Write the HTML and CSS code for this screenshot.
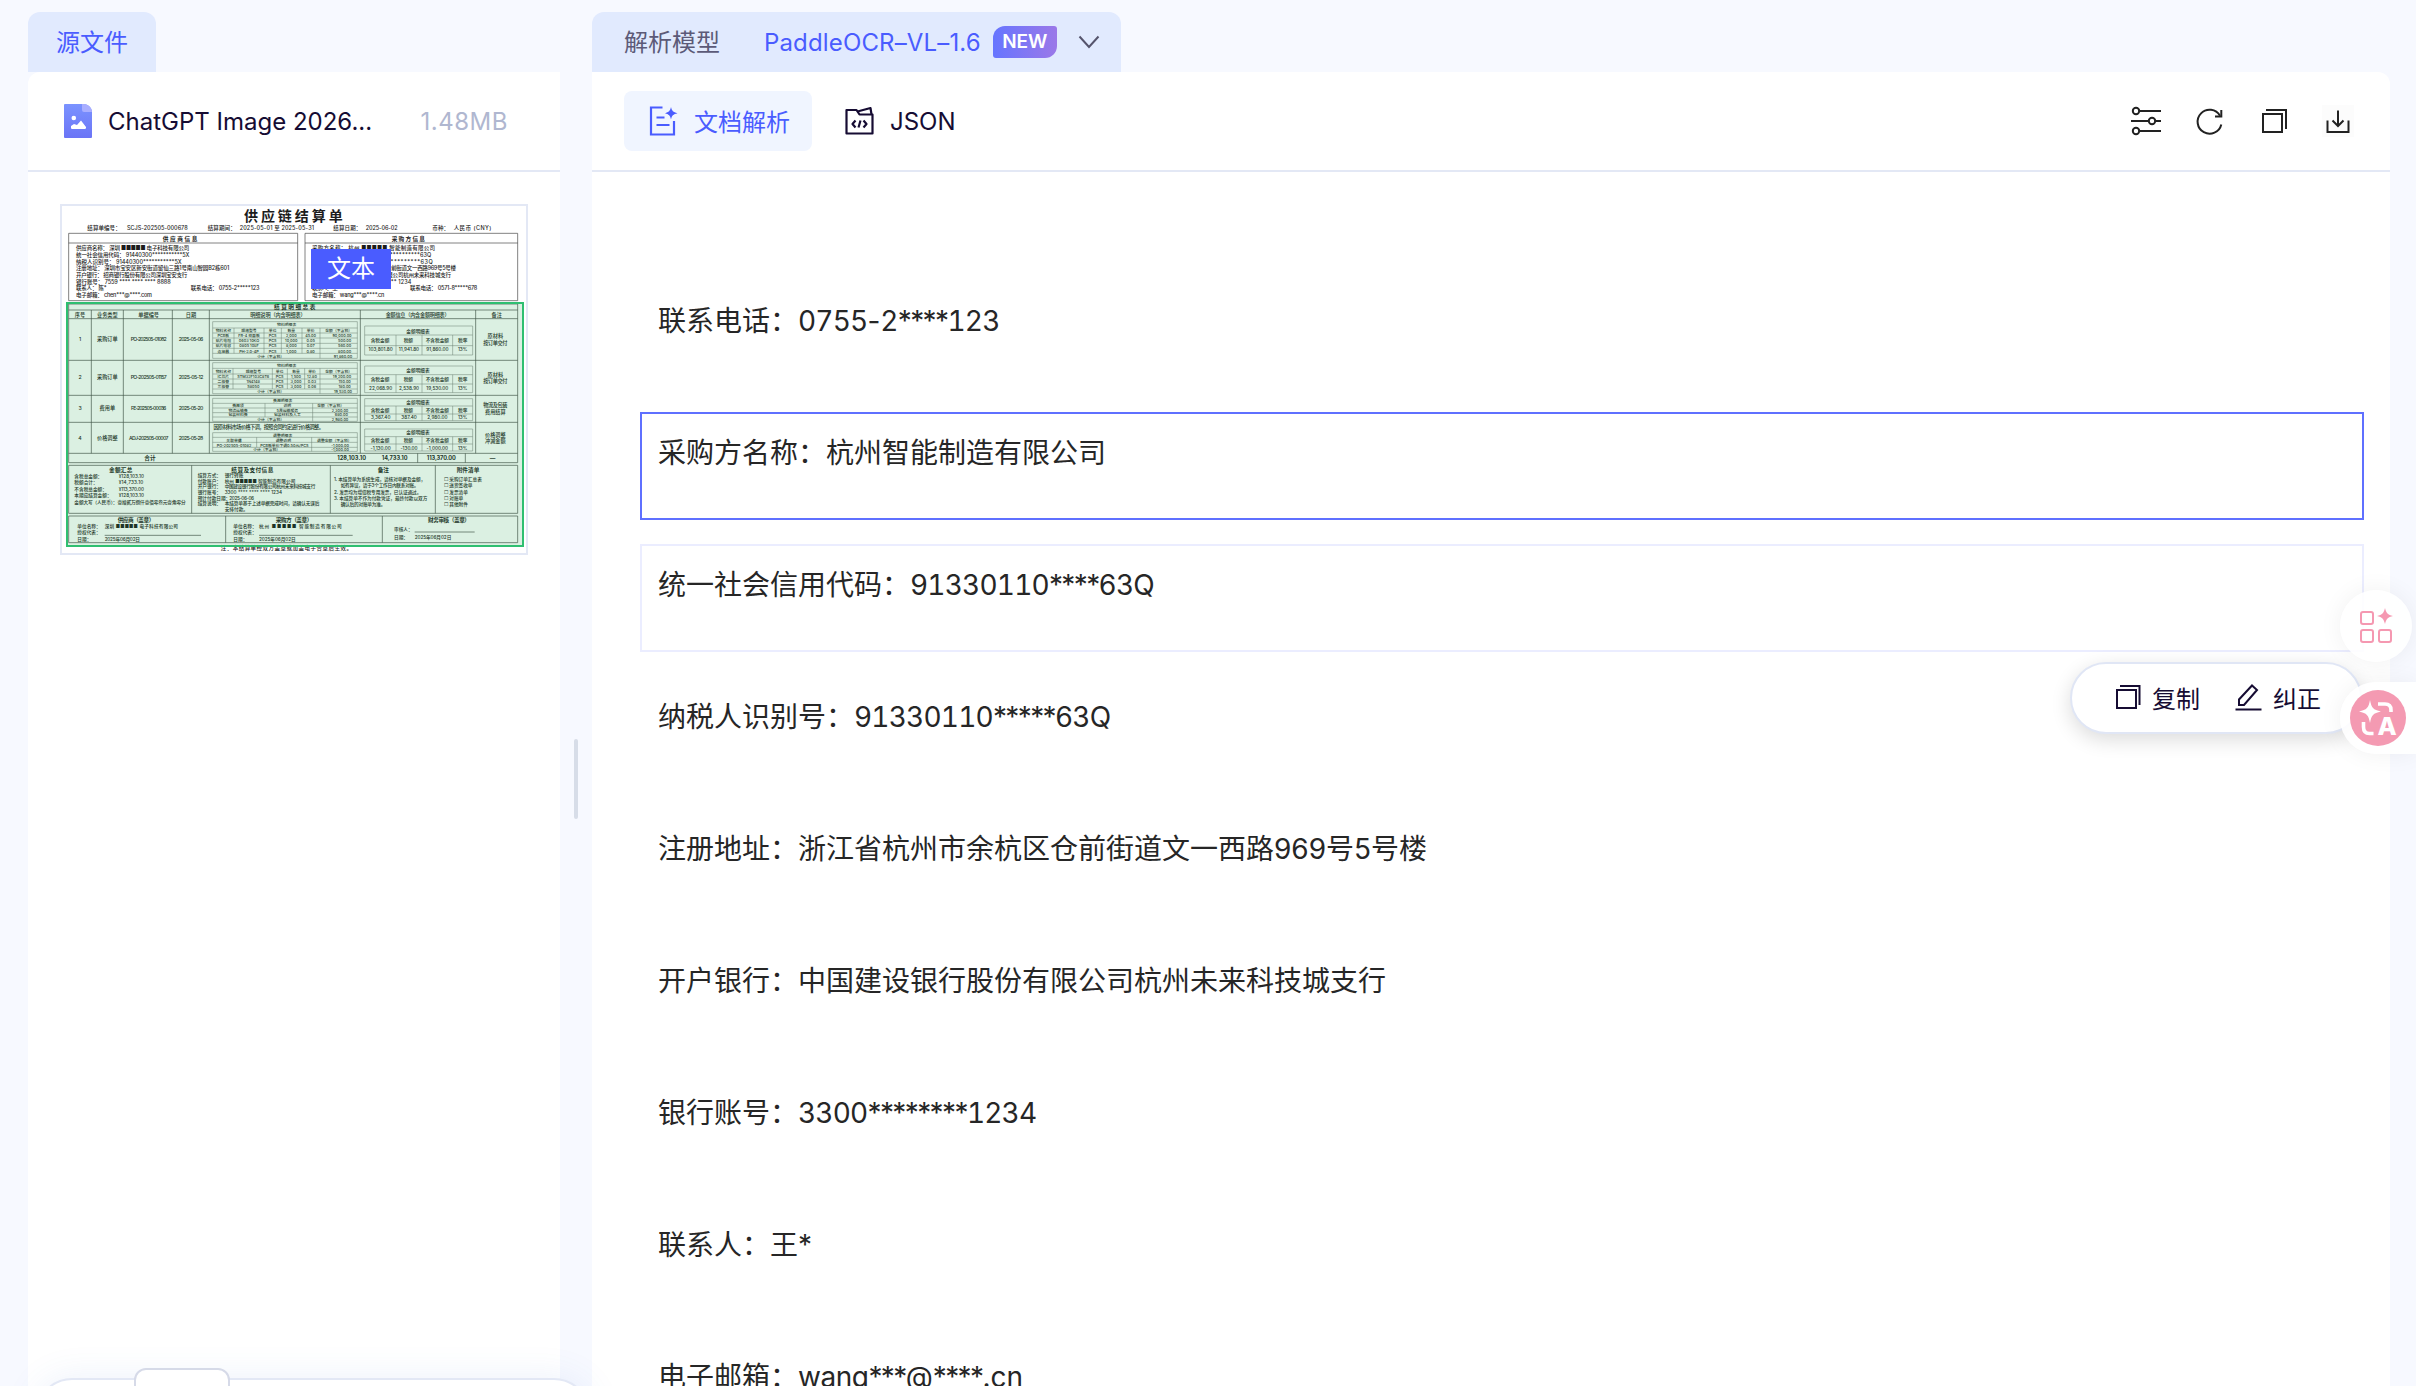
FILE: index.html
```
<!DOCTYPE html>
<html lang="zh-CN">
<head>
  <meta charset="UTF-8">
  <meta name="viewport" content="width=device-width, initial-scale=1.0">
  <title>文档解析</title>
  <link rel="stylesheet" href="styles.css">
</head>
<body>

  <section class="source">
    <div class="tab source-tab">源文件</div>
    <div class="panel source-panel">
      <header class="panel-head file-head">
        <svg class="file-icon" width="28" height="34" viewBox="0 0 28 34">
          <defs>
            <linearGradient id="fileFill" x1="0" y1="0" x2="0" y2="1">
              <stop offset="0" stop-color="#7b93ff"/>
              <stop offset="1" stop-color="#6b74f6"/>
            </linearGradient>
          </defs>
          <path d="M1 0h19c4 0 8 4 8 8v25a1 1 0 0 1-1 1H1a1 1 0 0 1-1-1V1a1 1 0 0 1 1-1z" fill="url(#fileFill)"/>
          <path d="M18 0h2c4 0 8 4 8 8h-8a2 2 0 0 1-2-2z" fill="#a9aeff"/>
          <circle cx="9.8" cy="14" r="2.3" fill="#fff"/>
          <path d="M7 24v-2l3-2 3 1 4-4.5 5 6.500v1l-.7 1H7.600z" fill="#fff"/>
        </svg>
        <span class="file-name">ChatGPT Image 2026...</span>
        <span class="file-size">1.48MB</span>
      </header>

      <div class="preview">
        <svg class="page" viewBox="0 0 1404 1053">
          <g class="t-title"><text x="552" y="51" textLength="296">供应链结算单</text></g>
          <g class="t-info">
            <text x="82" y="79" textLength="100">结算单编号：</text>
            <text x="201" y="79" textLength="182">SCJS-202505-000678</text>
            <text x="443" y="79" textLength="84">结算期间：</text>
            <text x="539" y="79" textLength="223">2025-05-01 至 2025-05-31</text>
            <text x="820" y="79" textLength="84">结算日期：</text>
            <text x="917" y="79" textLength="96">2025-06-02</text>
            <text x="1117" y="79" textLength="50">币种：</text>
            <text x="1181" y="79" textLength="113">人民币 (CNY)</text>
          </g>

          <!-- supplier / purchaser -->
          <path class="ln" d="M26 88H713V290H26zM26 117H713M735 88H1373V290H735zM735 117H1373"/>
          <g class="t-head">
            <text x="360" y="110" textLength="104">供应商信息</text>
            <text x="1045" y="110" textLength="100">采购方信息</text>
          </g>
          <g class="t-info">
            <text x="48" y="139" textLength="340">供应商名称： 深圳 ■■■■■ 电子科技有限公司</text>
            <text x="48" y="159" textLength="340">统一社会信用代码： 91440300***********5X</text>
            <text x="48" y="179" textLength="317">纳税人识别号： 91440300***********5X</text>
            <text x="48" y="199" textLength="460">注册地址： 深圳市宝安区新安街道留仙三路1号南山智园B2栋601</text>
            <text x="48" y="219" textLength="334">开户银行： 招商银行股份有限公司深圳宝安支行</text>
            <text x="48" y="239" textLength="284">银行账号： 7559 **** **** **** 8888</text>
            <text x="48" y="259" textLength="92">联系人： 陈*</text>
            <text x="392" y="259" textLength="206">联系电话： 0755-2*****123</text>
            <text x="48" y="279" textLength="228">电子邮箱： chen***@****.com</text>
            <text x="756" y="139" textLength="369">采购方名称： 杭州 ■■■■■ 智能制造有限公司</text>
            <text x="756" y="159" textLength="358">统一社会信用代码： 91330110**********63Q</text>
            <text x="756" y="179" textLength="362">纳税人识别号： 91330110***********63Q</text>
            <text x="756" y="199" textLength="432">注册地址： 浙江省杭州市余杭区仓前街道文一西路969号5号楼</text>
            <text x="756" y="219" textLength="417">开户银行： 中国建设银行股份有限公司杭州未来科技城支行</text>
            <text x="756" y="239" textLength="298">银行账号： 3300 **** **** **** 1234</text>
            <text x="756" y="259" textLength="84">联系人： 王*</text>
            <text x="1050" y="259" textLength="202">联系电话： 0571-8*****678</text>
            <text x="756" y="279" textLength="217">电子邮箱： wang***@****.cn</text>
          </g>

          <!-- settlement details -->
          <path class="ln" d="M26 300H1373V776H26zM26 318H1373M26 344H1373M26 469H1373M26 574H1373M26 655H1373M26 748H1373M94 318V748M190 318V748M337 318V748M448 318V748M901 318V748M1247 318V748M1073 748V776M1216 748V776"/>
          <g class="t-head">
            <text x="704" y="314" textLength="124">结算明细总表</text>
            <text x="270" y="769" textLength="34">合计</text>
            <text x="875" y="769" textLength="87">128,103.10</text>
            <text x="1004" y="769" textLength="77">14,733.10</text>
            <text x="1144" y="769" textLength="87">113,370.00</text>
            <text x="1298" y="769">—</text>
          </g>
          <g class="t-cell">
            <text x="60" y="338">序号</text><text x="142" y="338">业务类型</text><text x="266" y="338">单据编号</text><text x="393" y="338">日期</text>
            <text x="654" y="338" textLength="166">明细说明（内含明细表）</text><text x="1073" y="338" textLength="192">金额信息（内含金额明细表）</text><text x="1310" y="338">备注</text>
            <text x="60" y="411">1</text><text x="142" y="411">采购订单</text><text x="266" y="411" textLength="108">PO-202505-01082</text><text x="393" y="411" textLength="74">2025-05-06</text>
            <text x="60" y="526">2</text><text x="142" y="526">采购订单</text><text x="266" y="526" textLength="108">PO-202505-01157</text><text x="393" y="526" textLength="74">2025-05-12</text>
            <text x="60" y="618">3</text><text x="142" y="618">费用单</text><text x="266" y="618" textLength="106">FE-202505-00036</text><text x="393" y="618" textLength="74">2025-05-20</text>
            <text x="60" y="708">4</text><text x="142" y="708">价格调整</text><text x="266" y="708" textLength="118">ADJ-202505-00007</text><text x="393" y="708" textLength="74">2025-05-28</text>
            <text x="1306" y="403">原材料</text><text x="1306" y="422" textLength="72">按订单交付</text>
            <text x="1306" y="518">原材料</text><text x="1306" y="537" textLength="72">按订单交付</text>
            <text x="1306" y="610" textLength="72">物流及包装</text><text x="1306" y="630">费用结算</text>
            <text x="1306" y="698">价格调整</text><text x="1306" y="718">冲减金额</text>
            <text x="626" y="674" textLength="331">因原材料市场价格下调，按照合同约定进行价格调整。</text>
          </g>

          <!-- nested item tables -->
          <path class="ln thin" d="M458 353H892V463H458zM458 372H892M458 387H892M458 402H892M458 418H892M458 433H892M458 448H892M522 372V448M612 372V448M664 372V448M726 372V448M780 372V463"/>
          <path class="ln thin" d="M458 476H892V569H458zM458 493H892M458 510H892M458 525H892M458 540H892M458 555H892M519 493V555M637 493V555M682 493V555M734 493V555M780 493V569"/>
          <path class="ln thin" d="M458 583H892V652H458zM458 598H892M458 612H892M458 626H892M458 639H892M615 598V639M758 598V652"/>
          <path class="ln thin" d="M458 686H892V742H458zM458 700H892M458 715H892M458 730H892M590 700V730M755 700V742"/>
          <g class="t-mini">
            <text x="680" y="367">物料明细表</text>
            <text x="490" y="385">物料名称</text><text x="567" y="385">规格型号</text><text x="638" y="385">单位</text><text x="694" y="385">数量</text><text x="752" y="385">单价</text><text x="836" y="385">金额（不含税）</text>
            <text x="490" y="400">PCB板</text><text x="567" y="400">FR-4 双面板</text><text x="638" y="400">PCS</text><text x="694" y="400">2,000</text><text x="752" y="400">45.00</text><text x="846" y="400">90,000.00</text>
            <text x="490" y="415">贴片电阻</text><text x="567" y="415">0603 10KΩ</text><text x="638" y="415">PCS</text><text x="694" y="415">10,000</text><text x="752" y="415">0.05</text><text x="854" y="415">500.00</text>
            <text x="490" y="430">贴片电容</text><text x="567" y="430">0805 10uF</text><text x="638" y="430">PCS</text><text x="694" y="430">8,000</text><text x="752" y="430">0.07</text><text x="854" y="430">560.00</text>
            <text x="490" y="446">连接器</text><text x="567" y="446">PH-2.0-4P</text><text x="638" y="446">PCS</text><text x="694" y="446">1,000</text><text x="752" y="446">0.80</text><text x="854" y="446">800.00</text>
            <text x="632" y="461">小计（不含税）</text><text x="849" y="461">91,860.00</text>

            <text x="680" y="489">物料明细表</text>
            <text x="490" y="506">物料名称</text><text x="580" y="506">规格型号</text><text x="659" y="506">单位</text><text x="708" y="506">数量</text><text x="756" y="506">单价</text><text x="836" y="506">金额（不含税）</text>
            <text x="490" y="522">IC芯片</text><text x="580" y="522">STM32F103C8T6</text><text x="659" y="522">PCS</text><text x="708" y="522">1,500</text><text x="756" y="522">12.80</text><text x="846" y="522">19,200.00</text>
            <text x="490" y="537">二极管</text><text x="580" y="537">1N4148</text><text x="659" y="537">PCS</text><text x="708" y="537">3,000</text><text x="756" y="537">0.03</text><text x="854" y="537">150.00</text>
            <text x="490" y="552">三极管</text><text x="580" y="552">S8050</text><text x="659" y="552">PCS</text><text x="708" y="552">3,000</text><text x="756" y="552">0.06</text><text x="854" y="552">180.00</text>
            <text x="632" y="567">小计（不含税）</text><text x="849" y="567">19,530.00</text>

            <text x="668" y="595">费用明细表</text>
            <text x="534" y="610">费用项</text><text x="682" y="610">说明</text><text x="812" y="610">金额（不含税）</text>
            <text x="534" y="624">物流运输费</text><text x="682" y="624">5月运输服务</text><text x="840" y="624">2,300.00</text>
            <text x="534" y="637">包装材料费</text><text x="682" y="637">包装材料及人工</text><text x="844" y="637">680.00</text>
            <text x="632" y="650">小计（不含税）</text><text x="840" y="650">2,980.00</text>

            <text x="668" y="698">调整明细表</text>
            <text x="522" y="713">关联单据</text><text x="670" y="713">调整说明</text><text x="823" y="713">调整金额（不含税）</text>
            <text x="522" y="728">PO-202505-01082</text><text x="673" y="728">PCB板单价下调0.50元/PCS</text><text x="840" y="728">-1,000.00</text>
            <text x="620" y="741">小计（不含税）</text><text x="840" y="741">-1,000.00</text>
          </g>

          <!-- nested amount tables -->
          <path class="ln thin" d="M914 366H1238V453H914zM914 393H1238M914 425H1238M1008 393V453M1086 393V453M1178 393V453"/>
          <path class="ln thin" d="M914 486H1238V566H914zM914 512H1238M914 540H1238M1008 512V566M1086 512V566M1178 512V566"/>
          <path class="ln thin" d="M914 584H1238V650H914zM914 606H1238M914 630H1238M1008 606V650M1086 606V650M1178 606V650"/>
          <path class="ln thin" d="M914 675H1238V741H914zM914 698H1238M914 720H1238M1008 698V741M1086 698V741M1178 698V741"/>
          <g class="t-amount">
            <text x="1074" y="386">金额明细表</text>
            <text x="960" y="414">含税金额</text><text x="1045" y="414">税额</text><text x="1132" y="414">不含税金额</text><text x="1208" y="414">税率</text>
            <text x="962" y="442">103,801.80</text><text x="1047" y="442">11,941.80</text><text x="1132" y="442">91,860.00</text><text x="1208" y="442">13%</text>
            <text x="1074" y="503">金额明细表</text>
            <text x="960" y="530">含税金额</text><text x="1045" y="530">税额</text><text x="1132" y="530">不含税金额</text><text x="1208" y="530">税率</text>
            <text x="962" y="557">22,068.90</text><text x="1047" y="557">2,538.90</text><text x="1132" y="557">19,530.00</text><text x="1208" y="557">13%</text>
            <text x="1074" y="600">金额明细表</text>
            <text x="960" y="623">含税金额</text><text x="1045" y="623">税额</text><text x="1132" y="623">不含税金额</text><text x="1208" y="623">税率</text>
            <text x="962" y="646">3,367.40</text><text x="1047" y="646">387.40</text><text x="1132" y="646">2,980.00</text><text x="1208" y="646">13%</text>
            <text x="1074" y="691">金额明细表</text>
            <text x="960" y="714">含税金额</text><text x="1045" y="714">税额</text><text x="1132" y="714">不含税金额</text><text x="1208" y="714">税率</text>
            <text x="962" y="737">-1,130.00</text><text x="1047" y="737">-130.00</text><text x="1132" y="737">-1,000.00</text><text x="1208" y="737">13%</text>
          </g>

          <!-- summary row -->
          <path class="ln" d="M26 784H1373V928H26zM395 784V928M811 784V928M1126 784V928"/>
          <g class="t-head">
            <text x="182" y="803" textLength="70">金额汇总</text>
            <text x="577" y="803" textLength="126">结算及支付信息</text>
            <text x="970" y="803" textLength="34">备注</text>
            <text x="1224" y="803" textLength="68">附件清单</text>
          </g>
          <g class="t-note">
            <text x="43" y="821">含税总金额：</text><text x="176" y="821" textLength="76">¥128,103.10</text>
            <text x="43" y="841">税额合计：</text><text x="176" y="841" textLength="74">¥14,733.10</text>
            <text x="43" y="860">不含税总金额：</text><text x="176" y="860" textLength="76">¥113,370.00</text>
            <text x="43" y="879">本期应结算金额：</text><text x="176" y="879" textLength="76">¥128,103.10</text>
            <text x="43" y="901" textLength="334">金额大写（人民币）：壹拾贰万捌仟壹佰零叁元壹角零分</text>
            <text x="413" y="820">结算方式：</text><text x="494" y="820">银行转账</text>
            <text x="413" y="836">付款账户：</text><text x="494" y="836" textLength="212">杭州 ■■■■■ 智能制造有限公司</text>
            <text x="413" y="853">开户银行：</text><text x="494" y="853" textLength="272">中国建设银行股份有限公司杭州未来科技城支行</text>
            <text x="413" y="870">银行账号：</text><text x="494" y="870" textLength="172">3300 **** **** **** 1234</text>
            <text x="413" y="888">预计付款日期：</text><text x="508" y="888" textLength="74">2025-06-06</text>
            <text x="413" y="904">结算说明：</text><text x="494" y="904" textLength="284">本结算单基于上述单据完成时间，请确认无误后</text>
            <text x="494" y="921">安排付款。</text>
            <text x="822" y="831" textLength="274">1. 本结算单为系统生成，请核对单据及金额，</text>
            <text x="842" y="849" textLength="234">如有异议，请于3个工作日内联系对账。</text>
            <text x="822" y="869" textLength="262">2. 发票均为增值税专用发票，已认证通过。</text>
            <text x="822" y="888" textLength="280">3. 本结算单不作为付款凭证，最终付款以双方</text>
            <text x="842" y="907" textLength="134">确认后的对账单为准。</text>
            <text x="1152" y="831">☐ 采购订单汇总表</text>
            <text x="1152" y="849">☐ 送货签收单</text>
            <text x="1152" y="869">☐ 发票清单</text>
            <text x="1152" y="888">☐ 对账单</text>
            <text x="1152" y="907">☐ 其他附件</text>
          </g>

          <!-- signatures -->
          <path class="ln" d="M26 936H1373V1016H26zM497 936V1016M967 936V1016M134 994H423M597 994H878M1064 984H1244"/>
          <g class="t-head">
            <text x="228" y="954" textLength="110">供应商（盖章）</text>
            <text x="702" y="954" textLength="110">采购方（盖章）</text>
            <text x="1167" y="954" textLength="126">财务审核（盖章）</text>
          </g>
          <g class="t-note">
            <text x="52" y="971">单位名称：</text><text x="134" y="971" textLength="220">深圳 ■■■■■ 电子科技有限公司</text>
            <text x="52" y="990">授权代表：</text>
            <text x="52" y="1010">日期：</text><text x="134" y="1010" textLength="106">2025年06月02日</text>
            <text x="520" y="971">单位名称：</text><text x="597" y="971" textLength="248">杭州 ■■■■■ 智能制造有限公司</text>
            <text x="520" y="990">授权代表：</text>
            <text x="520" y="1010">日期：</text><text x="597" y="1010" textLength="110">2025年06月02日</text>
            <text x="1002" y="981">审核人：</text>
            <text x="1002" y="1004">日期：</text><text x="1064" y="1004" textLength="110">2025年06月02日</text>
          </g>
          <g class="t-info"><text x="482" y="1037" textLength="394">注：本结算单经双方盖章或加盖电子合章后生效。</text></g>
        </svg>
        <div class="region"></div>
        <div class="region-label">文本</div>
      </div>
    </div>

    <div class="pager"></div>
    <div class="pager-box"></div>
  </section>

  <div class="splitter"><i class="splitter-grip"></i></div>

  <main class="result">
    <div class="tab model-tab">
      <span class="model-label">解析模型</span>
      <span class="model-name">PaddleOCR–VL–1.6</span>
      <span class="badge-new">NEW</span>
      <svg class="chevron" width="22" height="14" viewBox="0 0 22 14"><path d="M1.5 1.5L11 12l9.500-10.500"/></svg>
    </div>

    <div class="panel result-panel">
      <header class="panel-head result-head">
        <button class="view-btn active">
          <svg width="30" height="30" viewBox="0 0 30 30" fill="none" stroke="currentColor" stroke-width="2.2">
            <path d="M14.500 1.500H3V28.500H26V15"/>
            <path d="M8.500 11.500h8M8.500 19h13"/>
            <path d="M23 1c.8 3.800 2.200 5.200 6.500 6.200-4.300 1-5.700 2.400-6.500 6.200-.8-3.800-2.200-5.200-6-6.200 3.800-1 5.200-2.400 6-6.200z" fill="currentColor" stroke="none"/>
          </svg>
          <span class="view-label">文档解析</span>
        </button>
        <button class="view-btn">
          <svg width="30" height="30" viewBox="0 0 30 30" fill="none" stroke="currentColor" stroke-width="2.2" stroke-linejoin="round">
            <path d="M2.500 27.500V4h10l3 4.500h13v19z"/>
            <path d="M13.500 5.500L26.500 2l1 6.500"/>
            <path d="M11.500 14.500L8.500 18l3 3.500M19.500 14.500L22.500 18l-3 3.500M16.500 14.500l-2 7"/>
          </svg>
          <span>JSON</span>
        </button>
        <div class="tools">
          <svg width="32" height="32" viewBox="0 0 32 32">
            <path d="M9 6h22M1 16h18M25 16h6M9 26h22"/>
            <circle cx="6" cy="6" r="3.200"/><circle cx="22" cy="16" r="3.200"/><circle cx="6" cy="26" r="3.200"/>
          </svg>
          <svg width="32" height="32" viewBox="0 0 32 32">
            <path d="M27.300 19.500A12 12 0 1 1 26 10.700"/>
            <path d="M27.300 5v6.500H21"/>
          </svg>
          <svg width="32" height="32" viewBox="0 0 32 32">
            <path d="M5 9h19v18H5zM8 5h20v19"/>
          </svg>
          <svg class="download" width="32" height="32" viewBox="0 0 32 32">
            <path d="M5.500 15.500V27h21V15.500M16 5.500V21M10.500 15.500L16 21l5.500-5.500"/>
          </svg>
        </div>
      </header>

      <div class="blocks">
        <div class="block">联系电话：<span class="num">0755</span>-<span class="num">2</span><span class="mask">****</span><span class="num">123</span></div>
        <div class="block selected">采购方名称：杭州智能制造有限公司</div>
        <div class="block hovered">统一社会信用代码：<span class="num">91330110</span><span class="mask">****</span><span class="num">63</span>Q</div>
        <div class="block">纳税人识别号：<span class="num">91330110</span><span class="mask">*****</span><span class="num">63</span>Q</div>
        <div class="block">注册地址：浙江省杭州市余杭区仓前街道文一西路969号5号楼</div>
        <div class="block">开户银行：中国建设银行股份有限公司杭州未来科技城支行</div>
        <div class="block">银行账号：<span class="num">3300</span><span class="mask">********</span><span class="num">1234</span></div>
        <div class="block">联系人：王<span class="mask">*</span></div>
        <div class="block">电子邮箱：<span class="mail">wang</span><span class="mask">***</span>@<span class="mask">****</span>.cn</div>
      </div>
    </div>
  </main>

  <div class="block-menu">
    <button>
      <svg width="28" height="28" viewBox="0 0 28 28"><path d="M3 7h19v18H3zM6 3h19.500v19"/></svg>
      复制
    </button>
    <button>
      <svg width="28" height="28" viewBox="0 0 28 28"><path d="M4 22v-5.500L17 2.500l5 4.500L9 22zM.5 26.500h26"/></svg>
      纠正
    </button>
  </div>

  <div class="float float-apps">
    <svg width="36" height="36" viewBox="0 0 36 36">
      <g fill="none" stroke="#f598b1" stroke-width="2">
        <rect x="3" y="4" width="12" height="12" rx="2"/>
        <rect x="3" y="22" width="12" height="12" rx="2"/>
        <rect x="21" y="22" width="12" height="12" rx="2"/>
      </g>
      <path d="M27 0c1.300 5.300 2.700 6.700 8 8-5.300 1.300-6.700 2.700-8 8-1.300-5.300-2.700-6.700-8-8 5.300-1.300 6.700-2.700 8-8z" fill="#f598b1"/>
    </svg>
  </div>
  <div class="float float-translate">
    <svg width="56" height="56" viewBox="0 0 56 56">
      <circle cx="28" cy="28" r="28" fill="#f49ab2"/>
      <path d="M20 10c1.600 8 3 9.700 11 11.500-8 1.800-9.400 3.500-11 11.500-1.600-8-3-9.700-11-11.500 8-1.800 9.400-3.500 11-11.500z" fill="#fff"/>
      <path d="M28 14h7c4 0 6 2 6 6v2M13.500 32v5c0 4.500 2 6.500 6 6.500h4" fill="none" stroke="#fff" stroke-width="3.600"/>
      <text x="37" y="45" text-anchor="middle">A</text>
    </svg>
  </div>

</body>
</html>
```
FILE: styles.css
```
:root {
  --bg-color: #f7f9ff;
  --tab-color: #e1eafe;
  --line-color: #e3e8f5;
  --primary-color: #4a5cff;
  --text-color: #160c33;
}

* {
  box-sizing: border-box;
}

body {
  display: flex;
  height: 1386px;
  margin: 0;
  padding: 12px 26px 0 28px;
  overflow: hidden;
  position: relative;
  background-color: var(--bg-color);
  color: var(--text-color);
  font-family: Inter, 'Noto Sans CJK SC', sans-serif;
  font-size: 24px;
  font-weight: 400;
}

button {
  display: flex;
  align-items: center;
  border: none;
  padding: 0;
  background: none;
  color: inherit;
  font: inherit;
  cursor: pointer;
}

svg {
  display: block;
  flex: none;
}

/* ---------- Layout ---------- */
.source,
.result {
  display: flex;
  flex-direction: column;
  align-items: flex-start;
}

.source {
  width: 532px;
}

.result {
  flex: 1;
}

.tab {
  display: flex;
  align-items: center;
  height: 60px;
  border-radius: 12px 12px 0 0;
  background-color: var(--tab-color);
  white-space: nowrap;
}

.panel {
  width: 100%;
  flex: 1;
  min-height: 0;
  overflow: hidden;
  background-color: #fff;
}

.panel-head {
  display: flex;
  align-items: center;
  height: 100px;
  border-bottom: 2px solid var(--line-color);
  white-space: nowrap;
}

.splitter {
  display: flex;
  align-items: center;
  justify-content: center;
  width: 32px;
  padding-top: 160px;
}

.splitter-grip {
  width: 4px;
  height: 80px;
  border-radius: 2px;
  background-color: #d7dde8;
}

/* ---------- Source file ---------- */
.source-tab {
  padding: 0 28px 3px;
  color: var(--primary-color);
}

.source-panel {
  border-radius: 12px 0 0 0;
}

.file-head {
  padding: 0 52px 0 36px;
}

.file-name {
  margin-left: 16px;
}

.file-size {
  margin-left: auto;
  color: #b0b7d0;
  letter-spacing: 0.5px;
}

.preview {
  position: relative;
  width: 468px;
  height: 351px;
  margin: 32px 0 0 32px;
}

.page {
  width: 468px;
  height: 351px;
  outline: 2px solid var(--line-color);
  outline-offset: -2px;
  fill: #1c1c1c;
  font-family: Inter, 'Noto Sans CJK SC', sans-serif;
  font-weight: 500;
}

.page .ln {
  fill: none;
  stroke: #444;
  stroke-width: 2;
}

.page .thin {
  stroke: #777;
  stroke-width: 1.5;
}

.t-title {
  font-size: 42px;
  font-weight: 700;
}

.t-info {
  font-size: 16.5px;
}

.t-head {
  font-size: 17px;
  font-weight: 700;
  text-anchor: middle;
}

.t-cell {
  font-size: 15.5px;
  text-anchor: middle;
}

.t-mini {
  font-size: 11.5px;
  text-anchor: middle;
}

.t-amount {
  font-size: 14px;
  text-anchor: middle;
}

.t-note {
  font-size: 14px;
}

.region {
  position: absolute;
  left: 6px;
  top: 98px;
  width: 458px;
  height: 245px;
  border: 2px solid #2fbf71;
  background-color: rgba(40, 165, 85, 0.17);
}

.region-label {
  position: absolute;
  left: 251px;
  top: 45px;
  width: 80px;
  height: 40px;
  line-height: 40px;
  text-align: center;
  color: #fff;
  background-color: var(--primary-color);
}

.pager {
  position: absolute;
  left: 36px;
  top: 1378px;
  width: 554px;
  height: 72px;
  border: 2px solid var(--line-color);
  border-radius: 36px;
  background-color: #fff;
  box-shadow: 0 0 36px rgba(70, 120, 220, 0.1);
}

.pager-box {
  position: absolute;
  left: 134px;
  top: 1368px;
  width: 96px;
  height: 60px;
  border: 2px solid #d6dae8;
  border-radius: 12px;
  background-color: #fff;
}

/* ---------- Result ---------- */
.model-tab {
  width: 529px;
  padding-left: 32px;
}

.model-label {
  padding-bottom: 3px;
  color: #5c5a78;
}

.model-name {
  margin-left: 44px;
  color: var(--primary-color);
  letter-spacing: 0.15px;
}

.badge-new {
  width: 64px;
  height: 32px;
  margin-left: 12px;
  border-radius: 12px 3px 12px 3px;
  background: linear-gradient(90deg, #6675ff, #9b78e8);
  color: #fff;
  font-size: 19px;
  font-weight: 600;
  line-height: 32px;
  text-align: center;
}

.chevron {
  margin-left: 21px;
  fill: none;
  stroke: #55546c;
  stroke-width: 2;
}

.result-panel {
  border-radius: 0 12px 0 0;
}

.result-head {
  padding: 0 36px 0 32px;
}

.view-btn {
  height: 60px;
  padding: 0 24px;
  gap: 16px;
  border-radius: 8px;
}

.view-btn.active {
  width: 188px;
  margin-right: 8px;
  background-color: #f0f5ff;
  color: var(--primary-color);
}

.view-label {
  padding-bottom: 2px;
}

.tools {
  display: flex;
  gap: 32px;
  margin-left: auto;
  fill: none;
  stroke: #222;
  stroke-width: 2;
}

.download {
  background-color: #fcfcfc;
}

.blocks {
  display: flex;
  flex-direction: column;
  gap: 24px;
  padding: 108px 26px 0 48px;
  color: #262626;
}

.block {
  flex: none;
  height: 108px;
  padding: 17px 16px;
  border: 2px solid transparent;
  font-size: 28px;
  line-height: 44px;
  white-space: nowrap;
}

.block.selected {
  border-color: #5f70ff;
}

.block.hovered {
  border-color: #ebedff;
}

.num {
  font-variant-numeric: tabular-nums;
  letter-spacing: -0.8px;
}

.mask {
  letter-spacing: -1.6px;
}

.mail {
  letter-spacing: -0.5px;
}

/* ---------- Floating ---------- */
.block-menu {
  position: absolute;
  left: 2070px;
  top: 662px;
  display: flex;
  gap: 35px;
  width: 292px;
  height: 72px;
  padding: 0 0 2px 42px;
  border: 2px solid #e0e6f5;
  border-radius: 36px;
  background-color: #fff;
  box-shadow: 0 6px 20px rgba(0, 0, 0, 0.14);
}

.block-menu button {
  gap: 10px;
}

.block-menu svg {
  fill: none;
  stroke: var(--text-color);
  stroke-width: 2;
}

.float {
  position: absolute;
  left: 2340px;
  display: flex;
  align-items: center;
  height: 72px;
  background-color: rgba(255, 255, 255, 0.88);
  box-shadow: 0 0 24px rgba(0, 0, 0, 0.06);
}

.float-apps {
  top: 590px;
  width: 72px;
  justify-content: center;
  border-radius: 36px;
}

.float-translate {
  top: 682px;
  width: 76px;
  padding-left: 10px;
  border-radius: 36px 0 0 36px;
}

.float-translate text {
  fill: #fff;
  font-size: 25px;
  font-weight: 800;
}
```
